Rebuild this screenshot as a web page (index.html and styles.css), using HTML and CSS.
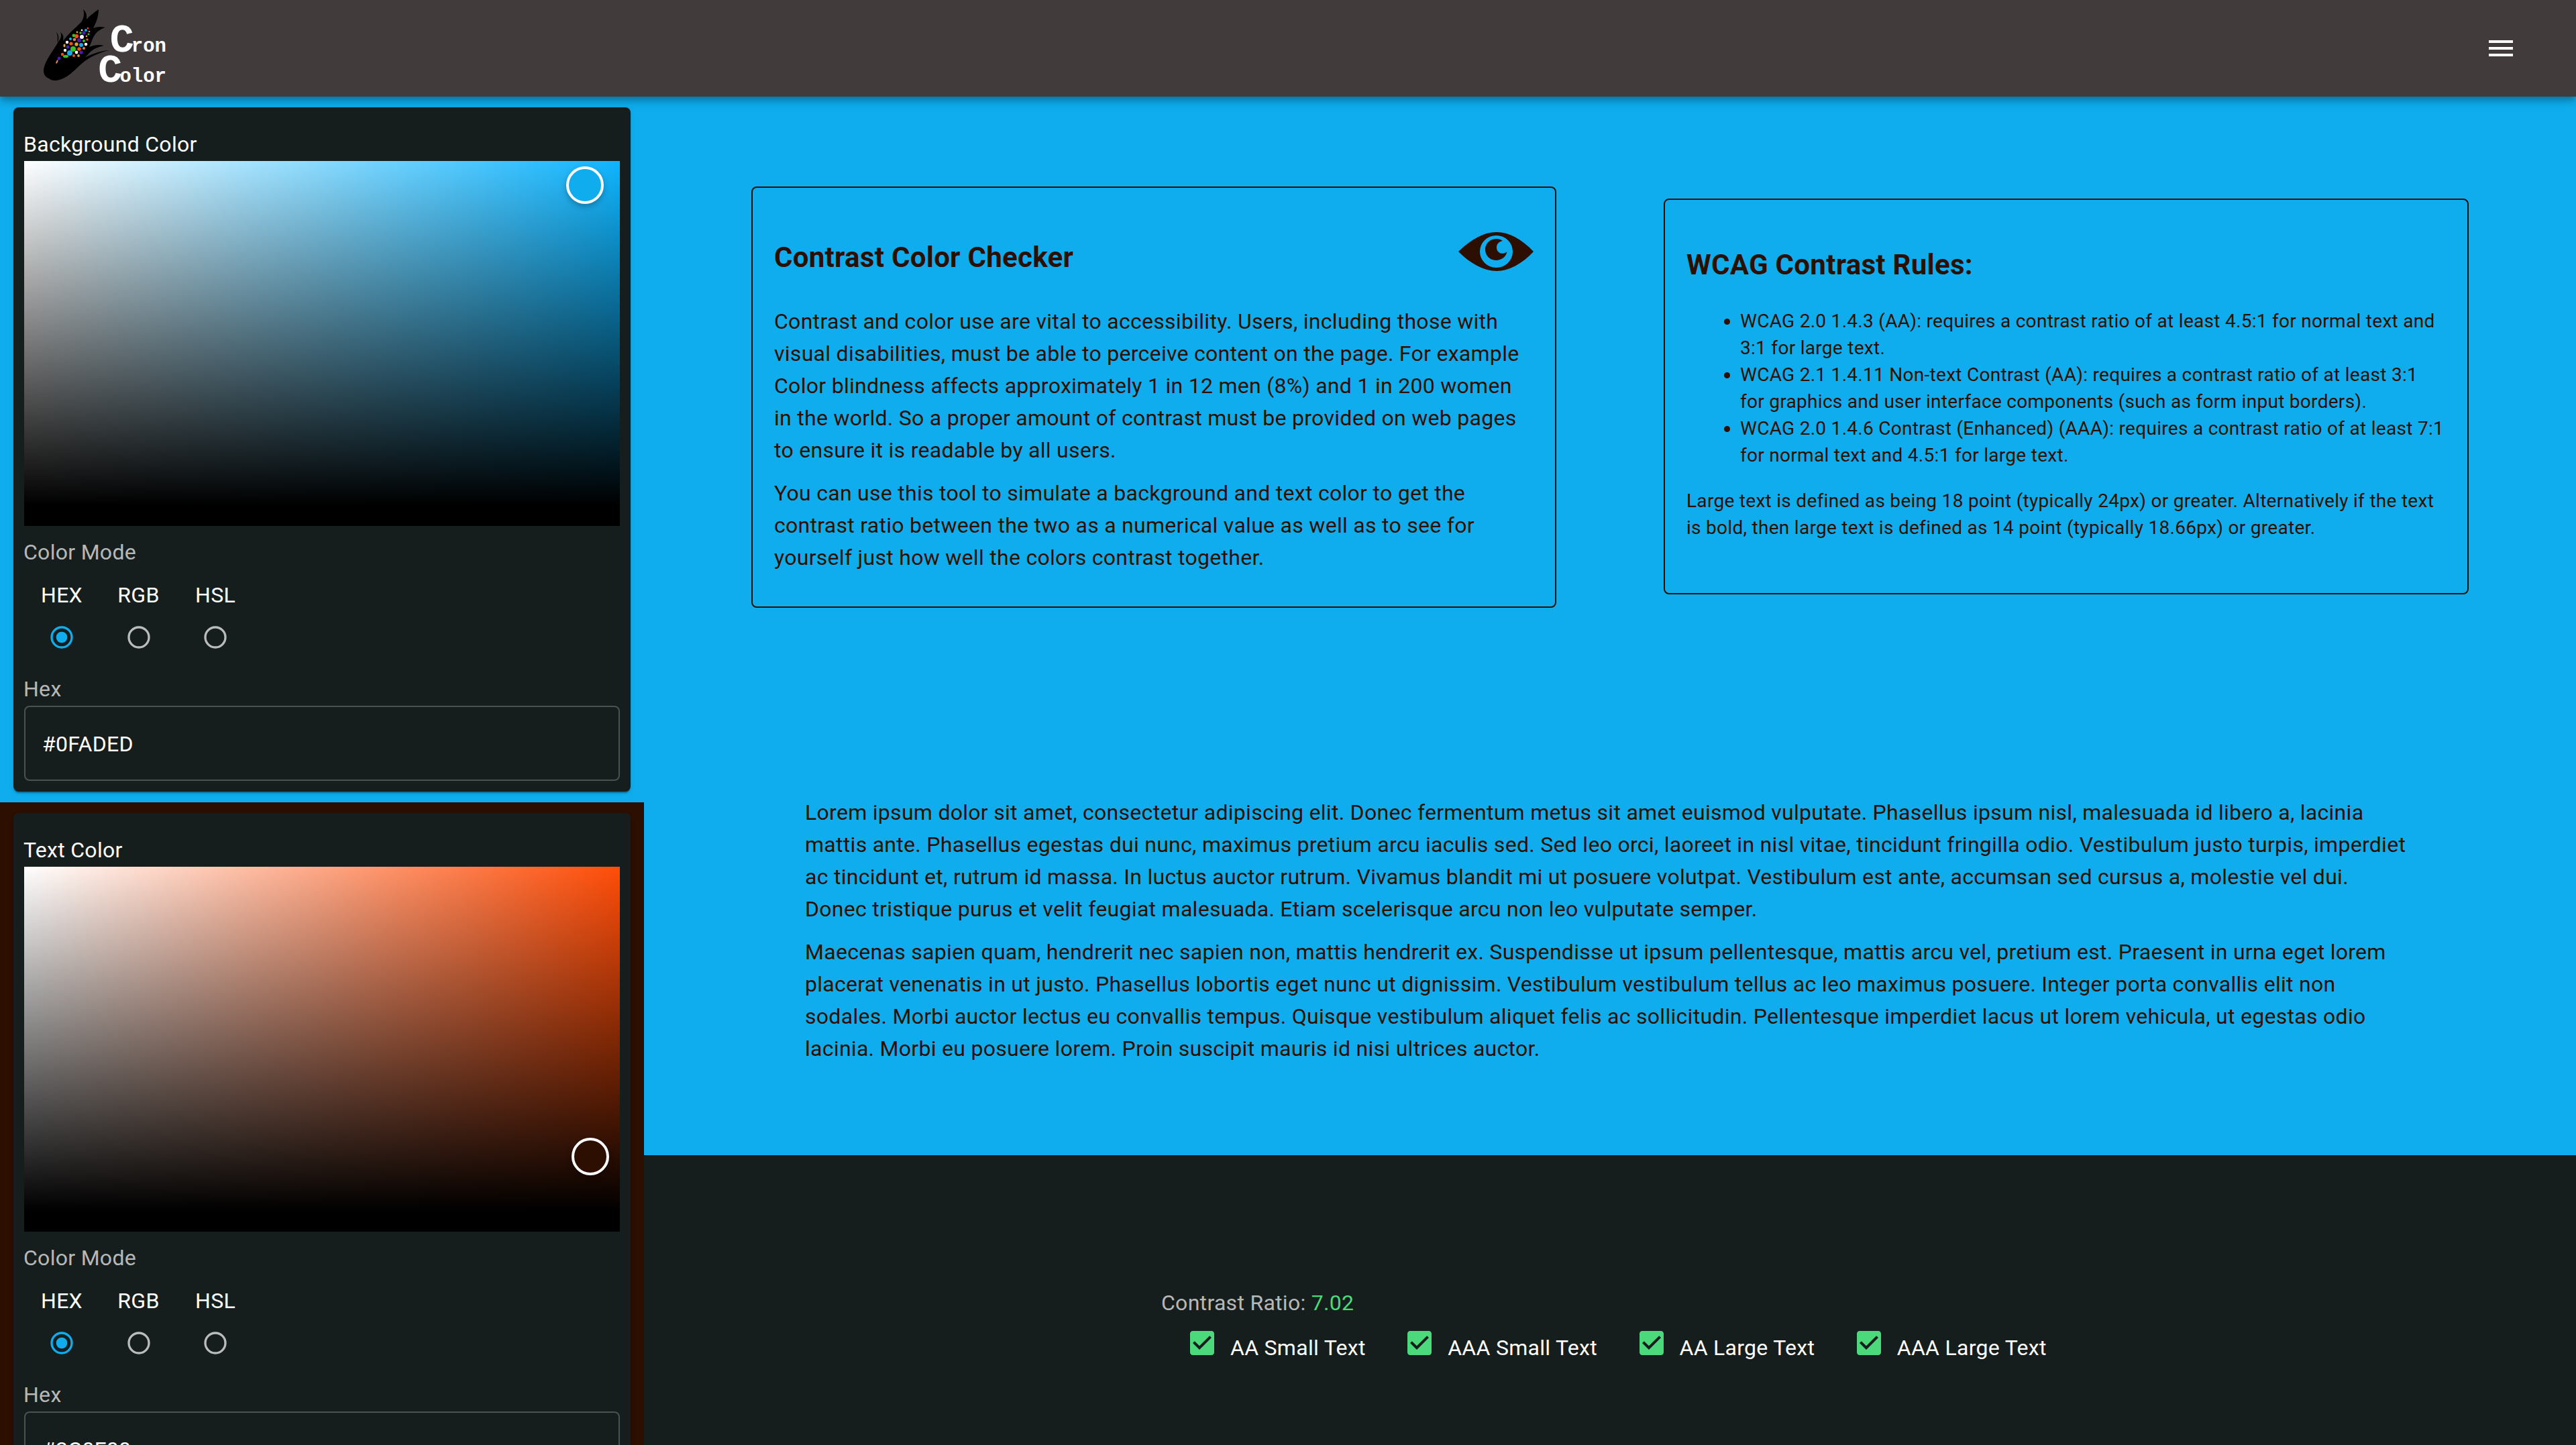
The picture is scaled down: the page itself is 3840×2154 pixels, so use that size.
FILE: index.html
```html
<!DOCTYPE html>
<html lang="en">
<head>
<meta charset="utf-8">
<title>Cron Color</title>
<link rel="stylesheet" href="styles.css">
</head>
<body>
<header class="appbar">
  <div class="logo">
    <svg class="corn" viewBox="0 0 110 120">
      <path d="M5 100C5 88 15 76 26 58C30 52 33 48 30 42C35 46 35 50 34 55C42 44 52 36 61 27C65 22 66 14 64 8C68 11 70 16 69 23C74 17 80 13 87 8C87 17 84 27 79 36C84 34 90 33 97 35C90 37 84 41 80 48C77 53 76 58 73 64C80 61 88 60 95 62C87 64 80 66 74 72C71 75 70 77 66 80C78 74 92 69 103 69C88 72 74 79 64 87C52 97 40 113 22 114C18 114 15 113 13 111C8 109 5 105 5 100Z"/>
      <path d="M24 42C28 46 28 52 26 58C25 52 27 49 24 42Z"/>
      <g fill="#3bc220"><circle cx="49" cy="67" r="4"/><ellipse cx="38" cy="78" rx="4" ry="2.2"/><circle cx="50" cy="47" r="2.4"/><circle cx="65" cy="55" r="2"/><circle cx="60" cy="43" r="1.7"/><circle cx="72" cy="45" r="1.5"/></g>
      <g fill="#14aaf0"><circle cx="44" cy="73" r="4"/><circle cx="61" cy="61" r="3"/><circle cx="45" cy="52" r="2"/><circle cx="68" cy="39" r="2"/></g>
      <g fill="#f4500f"><circle cx="54" cy="48" r="3"/><circle cx="46" cy="59" r="2.6"/><circle cx="58" cy="67" r="2.8"/><circle cx="33" cy="75" r="2.2"/><circle cx="50" cy="77" r="2"/><circle cx="70" cy="53" r="1.8"/><circle cx="71" cy="36" r="1.3"/></g>
      <g fill="#4a1db8"><circle cx="58" cy="54" r="3"/><circle cx="65" cy="43" r="2.7"/><circle cx="41" cy="64" r="2.5"/><circle cx="28" cy="81" r="2.4"/><circle cx="61" cy="72" r="2.6"/></g>
      <g fill="#fff"><circle cx="62" cy="49" r="3"/><circle cx="40" cy="57" r="2.2"/><circle cx="37" cy="69" r="2.2"/><circle cx="54" cy="72" r="2.4"/><circle cx="68" cy="60" r="2.3"/><circle cx="62" cy="39" r="1.3"/></g>
      <g fill="#e0a030"><circle cx="54" cy="60" r="2.7"/><ellipse cx="36" cy="62" rx="1.6" ry="2.4"/><circle cx="57" cy="77" r="1.9"/><circle cx="55" cy="42" r="1.4"/><circle cx="69" cy="48" r="1.3"/></g>
      <g fill="#d5805c"><circle cx="51" cy="53" r="2.3"/><circle cx="65" cy="66" r="2"/><ellipse cx="25" cy="86" rx="1.2" ry="3" transform="rotate(25 25 86)"/><circle cx="73" cy="41" r="1.3"/></g>
    </svg>
    <div class="wordmark"><div><b>C</b>ron</div><div><b>C</b>olor</div></div>
  </div>
  <svg class="menu" viewBox="0 0 24 24"><path d="M3 18h18v-2H3v2zm0-5h18v-2H3v2zm0-7v2h18V6H3z"/></svg>
</header>
<div class="page">
  <aside class="sidebar">
    <section class="slot slot-background">
      <div class="card">
        <div class="card-title">Background Color</div>
        <div class="picker picker-background"><span class="thumb"></span></div>
        <div class="label mode-label">Color Mode</div>
        <div class="modes">
          <label class="mode">HEX<svg class="radio on" viewBox="0 0 24 24"><circle cx="12" cy="12" r="9"/><circle class="dot" cx="12" cy="12" r="5"/></svg></label>
          <label class="mode">RGB<svg class="radio" viewBox="0 0 24 24"><circle cx="12" cy="12" r="9"/></svg></label>
          <label class="mode">HSL<svg class="radio" viewBox="0 0 24 24"><circle cx="12" cy="12" r="9"/></svg></label>
        </div>
        <div class="label hex-label">Hex</div>
        <div class="field">#0FADED</div>
      </div>
    </section>
    <section class="slot slot-text">
      <div class="card">
        <div class="card-title">Text Color</div>
        <div class="picker picker-text"><span class="thumb"></span></div>
        <div class="label mode-label">Color Mode</div>
        <div class="modes">
          <label class="mode">HEX<svg class="radio on" viewBox="0 0 24 24"><circle cx="12" cy="12" r="9"/><circle class="dot" cx="12" cy="12" r="5"/></svg></label>
          <label class="mode">RGB<svg class="radio" viewBox="0 0 24 24"><circle cx="12" cy="12" r="9"/></svg></label>
          <label class="mode">HSL<svg class="radio" viewBox="0 0 24 24"><circle cx="12" cy="12" r="9"/></svg></label>
        </div>
        <div class="label hex-label">Hex</div>
        <div class="field">#2C0F00</div>
      </div>
    </section>
  </aside>
  <main class="main">
    <section class="preview">
      <div class="boxes">
        <article class="box">
          <div class="box-head">
            <h2>Contrast Color Checker</h2>
            <svg class="eye" viewBox="0 0 112 60"><path fill-rule="evenodd" d="M0 30C20 11 38 1 57 1S95 12 112 30C95 48 76 59 57 59S18 48 0 30ZM56.500 6A24.500 24 0 1 0 56.500 54A24.500 24 0 1 0 56.500 6Z"/><path d="M66 14A16.500 16 0 1 0 72.500 30.500C64 36 57 31 57 24C57 18 61 15 66 14Z"/></svg>
          </div>
          <p>Contrast and color use are vital to accessibility. Users, including those with visual disabilities, must be able to perceive content on the page. For example Color blindness affects approximately 1 in 12 men (8%) and 1 in 200 women in the world. So a proper amount of contrast must be provided on web pages to ensure it is readable by all users.</p>
          <p>You can use this tool to simulate a background and text color to get the contrast ratio between the two as a numerical value as well as to see for yourself just how well the colors contrast together.</p>
        </article>
        <article class="box rules">
          <h2>WCAG Contrast Rules:</h2>
          <ul>
            <li>WCAG 2.0 1.4.3 (AA): requires a contrast ratio of at least 4.5:1 for normal text and 3:1 for large text.</li>
            <li>WCAG 2.1 1.4.11 Non-text Contrast (AA): requires a contrast ratio of at least 3:1 for graphics and user interface components (such as form input borders).</li>
            <li>WCAG 2.0 1.4.6 Contrast (Enhanced) (AAA): requires a contrast ratio of at least 7:1 for normal text and 4.5:1 for large text.</li>
          </ul>
          <p>Large text is defined as being 18 point (typically 24px) or greater. Alternatively if the text is bold, then large text is defined as 14 point (typically 18.66px) or greater.</p>
        </article>
      </div>
      <div class="sample">
        <p>Lorem ipsum dolor sit amet, consectetur adipiscing elit. Donec fermentum metus sit amet euismod vulputate. Phasellus ipsum nisl, malesuada id libero a, lacinia mattis ante. Phasellus egestas dui nunc, maximus pretium arcu iaculis sed. Sed leo orci, laoreet in nisl vitae, tincidunt fringilla odio. Vestibulum justo turpis, imperdiet ac tincidunt et, rutrum id massa. In luctus auctor rutrum. Vivamus blandit mi ut posuere volutpat. Vestibulum est ante, accumsan sed cursus a, molestie vel dui. Donec tristique purus et velit feugiat malesuada. Etiam scelerisque arcu non leo vulputate semper.</p>
        <p>Maecenas sapien quam, hendrerit nec sapien non, mattis hendrerit ex. Suspendisse ut ipsum pellentesque, mattis arcu vel, pretium est. Praesent in urna eget lorem placerat venenatis in ut justo. Phasellus lobortis eget nunc ut dignissim. Vestibulum vestibulum tellus ac leo maximus posuere. Integer porta convallis elit non sodales. Morbi auctor lectus eu convallis tempus. Quisque vestibulum aliquet felis ac sollicitudin. Pellentesque imperdiet lacus ut lorem vehicula, ut egestas odio lacinia. Morbi eu posuere lorem. Proin suscipit mauris id nisi ultrices auctor.</p>
      </div>
    </section>
    <section class="results">
      <div class="ratio">Contrast Ratio: <span class="value">7.02</span></div>
      <div class="checks">
        <div class="check"><svg viewBox="0 0 24 24"><path d="M19 3H5c-1.110 0-2 .9-2 2v14c0 1.100.890 2 2 2h14c1.110 0 2-.9 2-2V5c0-1.100-.890-2-2-2zm-9 14l-5-5 1.410-1.410L10 14.170l7.590-7.590L19 8l-9 9z"/></svg><span>AA Small Text</span></div>
        <div class="check"><svg viewBox="0 0 24 24"><path d="M19 3H5c-1.110 0-2 .9-2 2v14c0 1.100.890 2 2 2h14c1.110 0 2-.9 2-2V5c0-1.100-.890-2-2-2zm-9 14l-5-5 1.410-1.410L10 14.170l7.590-7.590L19 8l-9 9z"/></svg><span>AAA Small Text</span></div>
        <div class="check"><svg viewBox="0 0 24 24"><path d="M19 3H5c-1.110 0-2 .9-2 2v14c0 1.100.890 2 2 2h14c1.110 0 2-.9 2-2V5c0-1.100-.890-2-2-2zm-9 14l-5-5 1.410-1.410L10 14.170l7.590-7.590L19 8l-9 9z"/></svg><span>AA Large Text</span></div>
        <div class="check"><svg viewBox="0 0 24 24"><path d="M19 3H5c-1.110 0-2 .9-2 2v14c0 1.100.890 2 2 2h14c1.110 0 2-.9 2-2V5c0-1.100-.890-2-2-2zm-9 14l-5-5 1.410-1.410L10 14.170l7.590-7.590L19 8l-9 9z"/></svg><span>AAA Large Text</span></div>
      </div>
    </section>
  </main>
</div>
</body>
</html>
```
FILE: styles.css
```css
:root {
  --background: #0faded;
  --text: #2c0f00;
  --paper: #161e1d;
}
* { box-sizing: border-box; }
body {
  margin: 0;
  height: 2154px;
  overflow: hidden;
  background: var(--paper);
  color: #fff;
  font-family: Roboto, "Liberation Sans", sans-serif;
  font-size: 32px;
  line-height: 48px;
  letter-spacing: 0.29px;
}
p, h2, ul { margin: 0; }

.appbar {
  position: relative;
  z-index: 2;
  display: flex;
  justify-content: space-between;
  align-items: center;
  height: 144px;
  padding: 0 88px 0 60px;
  background: #423b3b;
  box-shadow: 0 4px 8px -2px rgba(0,0,0,.2), 0 8px 10px rgba(0,0,0,.14), 0 2px 20px rgba(0,0,0,.12);
}
.logo { display: flex; align-self: flex-start; padding-top: 6px; }
.corn { width: 110px; height: 120px; flex: none; }
.wordmark {
  width: 104px;
  margin: 41px 0 0 -26px;
  text-align: right;
  font: 700 29px/45px "Liberation Mono", monospace;
  letter-spacing: 0;
  white-space: nowrap;
}
.wordmark b { font-size: 60px; line-height: 0; letter-spacing: -4px; }
.menu { width: 48px; height: 48px; fill: #fff; }

.page { display: flex; height: 2010px; overflow: hidden; }
.sidebar { width: 960px; flex: none; }
.slot { height: 1052px; padding: 16px 20px; }
.slot-background { background: var(--background); }
.slot-text { background: var(--text); }
.card {
  height: 1020px;
  padding: 31px 16px 16px;
  border-radius: 8px;
  background: var(--paper);
  box-shadow: 0 4px 2px -2px rgba(0,0,0,.2), 0 2px 2px rgba(0,0,0,.14), 0 2px 6px rgba(0,0,0,.12);
}
.card-title { height: 49px; margin-left: -1px; }
.picker { position: relative; height: 544px; }
.picker-background { background: linear-gradient(to top, #000 30px, transparent), linear-gradient(to right, #fff, transparent), #0fb5ff; }
.picker-text { background: linear-gradient(to top, #000 30px, transparent), linear-gradient(to right, #fff, transparent), #ff4d08; }
.thumb {
  position: absolute;
  width: 56px;
  height: 56px;
  border: 4px solid #fff;
  border-radius: 50%;
  box-shadow: 0 4px 8px rgba(0,0,0,.25);
}
.picker-background .thumb { left: 808px; top: 8px; background: var(--background); }
.picker-text .thumb { left: 816px; top: 404px; background: var(--text); }
.label { margin-left: -1px; color: rgba(255,255,255,.7); }
.mode-label { margin-top: 15px; height: 64px; }
.modes { display: flex; height: 140px; padding-left: 18px; gap: 38.500px; }
.mode { display: flex; flex-direction: column; align-items: center; width: 76px; }
.radio { width: 40px; height: 40px; margin-top: 19px; fill: none; stroke: rgba(255,255,255,.7); stroke-width: 2; }
.radio.on { stroke: var(--background); }
.radio .dot { fill: var(--background); stroke: none; }
.hex-label { height: 49px; }
.field {
  height: 112px;
  padding: 31px 25px;
  border: 2px solid rgba(255,255,255,.23);
  border-radius: 8px;
}

.main { flex: 1; display: flex; flex-direction: column; }
.preview { height: 1578px; background: var(--background); color: var(--text); }
.boxes { display: flex; justify-content: space-evenly; align-items: center; height: 895px; }
.box {
  width: 1200px;
  height: 628px;
  padding: 32px;
  border: 2px solid var(--text);
  border-radius: 8px;
}
.box p:not(:last-child), .sample p:not(:last-child) { margin-bottom: 16px; }
.box-head { display: flex; justify-content: space-between; height: 143px; padding-top: 42px; }
.box h2 { font-size: 42px; line-height: 60px; font-weight: 700; }
.eye { width: 112px; height: 60px; margin-top: -9px; fill: var(--text); }
.box.rules { height: 590px; margin-bottom: 1px; font-size: 28px; line-height: 40px; }
.rules h2 { margin: 35px 0 34px; }
.rules ul { padding-left: 80px; margin-bottom: 28px; }
.sample { width: 2400px; margin: 148px 240px 0; }

.results { flex: 1; padding: 196px 0 0 771px; }
.ratio { color: rgba(255,255,255,.7); }
.value { color: #4cd97b; }
.checks { display: flex; gap: 56.500px; padding: 12px 0 0 37px; }
.check { display: flex; gap: 18px; }
.check span { padding-top: 7px; white-space: nowrap; }
.check svg { width: 48px; height: 48px; fill: #4cd97b; }
```
